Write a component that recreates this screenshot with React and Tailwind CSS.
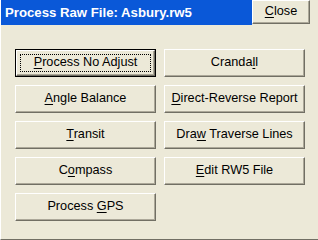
import React from "react";

const font = { fontFamily: '"Liberation Sans", Arial, sans-serif' };

function Btn({ children, focused }) {
  if (focused) {
    return (
      <div className="h-[28px] border border-black bg-[#ECE9D8]">
        <div className="h-full border-t border-l border-white border-r border-b border-r-[#716f64] border-b-[#716f64] shadow-[inset_-1px_-1px_0_#aca899] p-[3px]">
          <div className="h-full border border-dotted border-black flex items-center justify-center text-[12.7px] text-black">
            {children}
          </div>
        </div>
      </div>
    );
  }
  return (
    <div className="h-[28px] bg-[#ECE9D8] border-t border-l border-white border-r border-b border-r-[#716f64] border-b-[#716f64] shadow-[inset_-1px_-1px_0_#aca899] flex items-center justify-center text-[12.7px] text-black">
      {children}
    </div>
  );
}

const U = ({ children }) => <span className="underline underline-offset-2">{children}</span>;

export default function App() {
  return (
    <div className="w-[318px] h-[240px] bg-[#ECE9D8] flex flex-col border-l border-white border-b border-b-[#716f64]" style={font}>
      <div className="flex h-[25px]">
        <div className="flex-1 bg-[#0a58d8] flex items-center pl-[4px] text-white font-bold text-[13.2px]">
          Process Raw File: Asbury.rw5
        </div>
        <div className="w-[58px] h-[24px] bg-[#ECE9D8] border-t border-l border-white border-r border-b border-r-[#716f64] border-b-[#716f64] shadow-[inset_-1px_-1px_0_#aca899] flex items-center justify-center text-[12.7px] text-black">
          <span><U>C</U>lose</span>
        </div>
        <div className="w-[8px]" />
      </div>
      <div className="grid grid-cols-[141px_141px] gap-x-[8px] gap-y-[8px] pl-[14px] pt-[24px]">
        <Btn focused><span><U>P</U>rocess No Adjust</span></Btn>
        <Btn><span>Cranda<U>l</U>l</span></Btn>
        <Btn><span><U>A</U>ngle Balance</span></Btn>
        <Btn><span><U>D</U>irect-Reverse Report</span></Btn>
        <Btn><span><U>T</U>ransit</span></Btn>
        <Btn><span>Dra<U>w</U> Traverse Lines</span></Btn>
        <Btn><span>C<U>o</U>mpass</span></Btn>
        <Btn><span><U>E</U>dit RW5 File</span></Btn>
        <Btn><span>Process <U>G</U>PS</span></Btn>
      </div>
    </div>
  );
}
